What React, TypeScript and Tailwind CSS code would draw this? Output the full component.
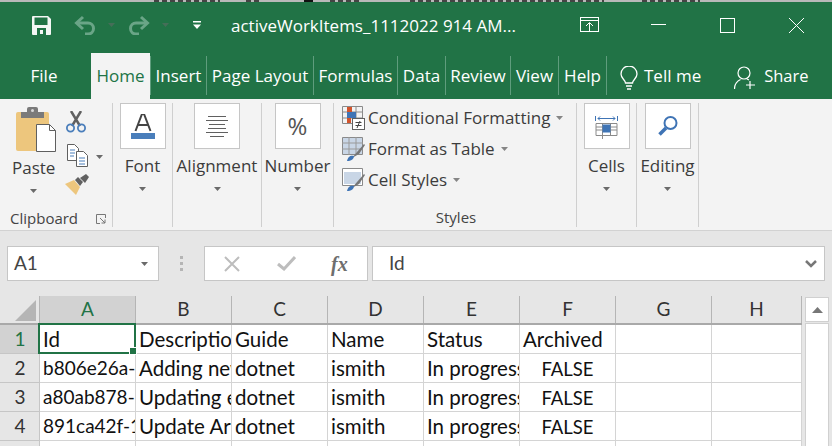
import React from 'react';

const tabs = [
  { label: 'Insert', w: 'w-[56px]' },
  { label: 'Page Layout', w: 'w-[107px]' },
  { label: 'Formulas', w: 'w-[84px]' },
  { label: 'Data', w: 'w-[48px]' },
  { label: 'Review', w: 'w-[65px]' },
  { label: 'View', w: 'w-[48px]' },
  { label: 'Help', w: 'w-[48px]' },
];

const columns = [
  { label: 'A', w: 'w-[96px]', active: true },
  { label: 'B', w: 'w-[96px]' },
  { label: 'C', w: 'w-[96px]' },
  { label: 'D', w: 'w-[96px]' },
  { label: 'E', w: 'w-[96px]' },
  { label: 'F', w: 'w-[96px]' },
  { label: 'G', w: 'w-[96px]' },
  { label: 'H', w: 'w-[90px]' },
];

const rows = [
  ['Id', 'Description', 'Guide', 'Name', 'Status', 'Archived'],
  ['b806e26a-1f3c', 'Adding new', 'dotnet', 'ismith', 'In progress', 'FALSE'],
  ['a80ab878-7c2d', 'Updating existing', 'dotnet', 'ismith', 'In progress', 'FALSE'],
  ['891ca42f-1b9e', 'Update Article', 'dotnet', 'ismith', 'In progress', 'FALSE'],
  ['', '', '', '', '', ''],
];

const Caret = ({ className = '' }: { className?: string }) => (
  <svg width="7" height="4" viewBox="0 0 7 4" className={className}>
    <path d="M0 0h7L3.500 4z" fill="#6a6a6a" />
  </svg>
);

const Sep = ({ w, children }: { w: string; children: React.ReactNode }) => (
  <div className={`${w} h-[124px] shrink-0 border-r border-[#cfcfcf] flex flex-col items-center relative`}>{children}</div>
);

const BigGroup = ({ w, label, children }: { w: string; label: string; children: React.ReactNode }) => (
  <Sep w={w}>
    <div className="w-[46px] h-[46px] bg-white border border-[#c6c6c6] flex items-center justify-center">{children}</div>
    <div className="mt-[5px] text-[17px] leading-[24px] text-[#3c3c3c] whitespace-nowrap">{label}</div>
    <Caret className="mt-[9px]" />
  </Sep>
);

const StyleRow = ({ icon, label }: { icon: React.ReactNode; label: string }) => (
  <div className="h-[31px] flex items-center">
    <div className="w-[26px] shrink-0">{icon}</div>
    <span className="text-[17px] leading-[24px] text-[#3c3c3c] whitespace-nowrap">{label}</span>
    <Caret className="ml-[6px] opacity-80" />
  </div>
);

export default function App() {
  return (
    <div className="w-[832px] h-[446px] overflow-hidden bg-[#e6e6e6] flex flex-col font-['Open_Sans',sans-serif] relative">
      <svg width="832" height="2" viewBox="0 0 832 2" className="block shrink-0 bg-[#b9b9b9]">
        <path d="M154 1h66M246 1h16M330 1h30M410 1h194M642 1h58" stroke="#444" strokeWidth="2" strokeDasharray="5 3" />
        <path d="M304 1h9" stroke="#111" strokeWidth="2" />
      </svg>

      {/* title bar */}
      <div className="h-[48px] bg-[#217346] shrink-0 flex items-center text-white pb-[2px]">
        <svg width="19" height="19" viewBox="0 0 19 19" className="ml-[32px]">
          <path d="M0 1a1 1 0 011-1h15l3 3v15a1 1 0 01-1 1H1a1 1 0 01-1-1z" fill="#f4f7f5" />
          <rect x="2.500" y="1.500" width="13" height="7.500" fill="#217346" />
          <rect x="5" y="12" width="9" height="7" fill="#217346" />
          <rect x="8" y="14" width="3" height="4" fill="#f4f7f5" />
        </svg>
        <svg width="22" height="20" viewBox="0 0 22 20" fill="none" stroke="#6aa587" strokeWidth="3" className="ml-[23px]">
          <path d="M9 2L2.500 8 9 14" />
          <path d="M3 8h11a5.500 5.500 0 010 11h-3" />
        </svg>
        <Caret className="ml-[12px] opacity-50" />
        <svg width="22" height="20" viewBox="0 0 22 20" fill="none" stroke="#6aa587" strokeWidth="3" className="ml-[13px]">
          <path d="M13 2l6.500 6L13 14" />
          <path d="M19 8H8a5.500 5.500 0 000 11h3" />
        </svg>
        <Caret className="ml-[12px] opacity-50" />
        <svg width="8" height="8" viewBox="0 0 8 8" className="ml-[24px]">
          <rect width="8" height="1.500" fill="#fff" />
          <path d="M0 3.500h8L4 8z" fill="#fff" />
        </svg>
        <span className="ml-[30px] mt-[2px] text-[17px] w-[330px] whitespace-nowrap">activeWorkItems_1112022 914 AM...</span>
        <svg width="19" height="16" viewBox="0 0 19 16" fill="none" stroke="#fff" className="ml-[19px]">
          <rect x="0.500" y="0.500" width="18" height="14" />
          <path d="M0 3.500h19M9.500 14V6M6 9l3.500-3.500L13 9" />
        </svg>
        <svg width="15" height="2" viewBox="0 0 15 2" className="ml-[52px]">
          <rect width="15" height="1" fill="#fff" />
        </svg>
        <svg width="15" height="15" viewBox="0 0 15 15" fill="none" stroke="#fff" className="ml-[54px]">
          <rect x="0.500" y="0.500" width="14" height="14" />
        </svg>
        <svg width="15" height="15" viewBox="0 0 15 15" fill="none" stroke="#fff" className="ml-[54px]">
          <path d="M0 0l15 15M15 0L0 15" />
        </svg>
      </div>

      {/* tabs */}
      <div className="h-[49px] bg-[#217346] shrink-0 flex text-white text-[17px] pt-[3px]">
        <div className="w-[91px] flex items-center justify-center pr-[3px]">File</div>
        <div className="w-[59px] bg-[#f3f3f3] text-[#217346] flex items-center justify-center">Home</div>
        <div className="flex h-[39px] mt-[3px] text-white">
          <div className="w-px bg-[#5f9d7d]" />
          {tabs.map((t) => (
            <div key={t.label} className={`${t.w} shrink-0 border-r border-[#5f9d7d] flex items-center justify-center whitespace-nowrap`}>
              {t.label}
            </div>
          ))}
        </div>
        <svg width="18" height="24" viewBox="0 0 18 24" fill="none" stroke="#fff" strokeWidth="1.300" className="ml-[13px] mt-[13px]">
          <path d="M5.500 17c0-3-4.500-4.500-4.500-9a8 8 0 0116 0c0 4.500-4.500 6-4.500 9z" />
          <path d="M6 20h6M7 23h4" />
        </svg>
        <span className="ml-[6px] flex items-center whitespace-nowrap">Tell me</span>
        <svg width="22" height="24" viewBox="0 0 22 24" fill="none" stroke="#fff" strokeWidth="1.200" className="ml-[33px] mt-[13px]">
          <circle cx="10" cy="7" r="6" />
          <path d="M0.500 23c0-5 3-8 6-9.500M13 13l2 1M16 15v8M12 19h9" />
        </svg>
        <span className="ml-[8px] flex items-center text-[16.500px]">Share</span>
      </div>

      {/* ribbon */}
      <div className="h-[132px] shrink-0 bg-[#f3f3f3] border-b border-[#d2d2d2] flex pt-[4px]">
        <Sep w="w-[113px]">
          <svg width="42" height="46" viewBox="0 0 42 46" className="absolute left-[15px] top-[4px]">
            <path d="M1 7a2 2 0 012-2h29a2 2 0 012 2v35a2 2 0 01-2 2H3a2 2 0 01-2-2z" fill="#edc67d" />
            <path d="M6 5h6V2a2 2 0 012-2h7a2 2 0 012 2v3h6v6H6z" fill="#7a7a7a" />
            <circle cx="17.500" cy="3.500" r="1.500" fill="#d8d8d8" />
            <path d="M21.500 17.500h13l6 6v21h-19z" fill="#fff" stroke="#5f5f5f" />
            <path d="M34.500 17.500v6h6" fill="none" stroke="#5f5f5f" />
          </svg>
          <div className="absolute left-[12px] top-[53px] text-[17px] leading-[24px] text-[#3c3c3c]">Paste</div>
          <Caret className="absolute left-[30px] top-[86px]" />
          <svg width="20" height="22" viewBox="0 0 20 22" fill="none" className="absolute left-[66px] top-[8px]">
            <path d="M5 0l9 15M15 0L6 15" stroke="#606060" strokeWidth="2.500" />
            <circle cx="4.500" cy="17" r="3.600" stroke="#4a7ebb" strokeWidth="1.800" />
            <circle cx="15.500" cy="17" r="3.600" stroke="#4a7ebb" strokeWidth="1.800" />
          </svg>
          <svg width="21" height="23" viewBox="0 0 21 23" fill="#fff" stroke="#606060" className="absolute left-[67px] top-[41px]">
            <path d="M0.500 0.500h7l4 4v12h-11z" />
            <path d="M9.500 7.500h7l4 4v11h-11z" />
            <path d="M3 6h5M3 9h5M3 12h4M12 14h6M12 17h6M12 20h6" stroke="#4a7ebb" />
          </svg>
          <Caret className="absolute left-[96px] top-[52px]" />
          <svg width="24" height="21" viewBox="0 0 24 21" className="absolute left-[65px] top-[71px]">
            <path d="M0 10l9-4 6 7-4 8z" fill="#edc67d" />
            <path d="M10 6l3-3 5 5-3 4z" fill="#606060" />
            <path d="M15 4l6-4 3 3-4 6z" fill="#606060" />
          </svg>
          <div className="absolute left-[10px] top-[104px] text-[15px] leading-[22px] text-[#444]">Clipboard</div>
          <svg width="10" height="10" viewBox="0 0 10 10" fill="none" stroke="#777" className="absolute left-[96px] top-[111px]">
            <path d="M9.500 4V0.500H0.500V9.500H4M4 4l5 5M9 5.500V9H5.500" />
          </svg>
        </Sep>
        <BigGroup w="w-[60px]" label="Font">
          <svg width="24" height="25" viewBox="0 0 24 25">
            <path d="M4.500 17L11 0h2l6.500 17M7 11h10" fill="none" stroke="#444" strokeWidth="2" />
            <rect y="19" width="24" height="6" fill="#4a7ebb" />
          </svg>
        </BigGroup>
        <BigGroup w="w-[89px]" label="Alignment">
          <svg width="22" height="21" viewBox="0 0 22 21" stroke="#606060">
            <path d="M2 0.500h18M0 4.500h22M3 8.500h16M2 12.500h18M0 16.500h22M4 20.500h14" />
          </svg>
        </BigGroup>
        <BigGroup w="w-[72px]" label="Number">
          <span className="text-[24px] leading-none text-[#555]">%</span>
        </BigGroup>

        {/* styles */}
        <Sep w="w-[243px]">
          <div className="w-full pl-[8px] -mt-[1px]">
            <StyleRow
              label="Conditional Formatting"
              icon={
                <svg width="23" height="24" viewBox="0 0 23 24" fill="none">
                  <path d="M0.500 0.500h20v17h-20zM7 0v18M14 0v18M0 6h21M0 12h21" stroke="#8a8a8a" />
                  <rect x="5" y="1" width="5" height="5" fill="#d2542c" />
                  <rect x="5" y="6" width="9" height="6" fill="#3f74b5" />
                  <rect x="5" y="12" width="4" height="5" fill="#d2542c" />
                  <rect x="10.500" y="12.500" width="12" height="11" fill="#fff" stroke="#606060" />
                  <path d="M13.500 16.500h6M13.500 19.500h6M15 22l3-7" stroke="#444" />
                </svg>
              }
            />
            <StyleRow
              label="Format as Table"
              icon={
                <svg width="23" height="24" viewBox="0 0 23 24" fill="none">
                  <path d="M0.500 0.500h20v17h-20z" fill="#c9d6e6" stroke="#8a8a8a" />
                  <path d="M7 0v18M14 0v18M0 6h21M0 12h21" stroke="#9a9a9a" />
                  <path d="M10 21l5-6 7-8 1 1-6 9z" fill="#777" />
                  <path d="M5 24c1-5 4-6 7-5 0 3-3 5-7 5z" fill="#3f74b5" />
                </svg>
              }
            />
            <StyleRow
              label="Cell Styles"
              icon={
                <svg width="23" height="23" viewBox="0 0 23 23" fill="none">
                  <path d="M0.500 0.500h20v17h-20z" fill="#fff" stroke="#8a8a8a" />
                  <rect x="2" y="4" width="17" height="12" fill="#c9d6e6" />
                  <path d="M10 20l5-6 7-8 1 1-6 9z" fill="#777" />
                  <path d="M5 23c1-5 4-6 7-5 0 3-3 5-7 5z" fill="#3f74b5" />
                </svg>
              }
            />
          </div>
          <div className="absolute -bottom-[1px] left-0 right-0 text-center text-[15px] leading-[22px] text-[#444] pl-[2px]">Styles</div>
        </Sep>
        <BigGroup w="w-[60px]" label="Cells">
          <svg width="23" height="25" viewBox="0 0 23 25" fill="none">
            <path d="M0.500 2v5M22.500 2v5M3 4.500h17M3 4.500l2-2M3 4.500l2 2M20 4.500l-2-2M20 4.500l-2 2" stroke="#3f74b5" />
            <path d="M1 9.500h21v12H1zM7.500 10v15M15.500 10v11M1 16h21M1 13h21" stroke="#8a8a8a" />
            <rect x="7.500" y="10.500" width="8" height="8" fill="#3f74b5" />
          </svg>
        </BigGroup>
        <BigGroup w="w-[62px]" label="Editing">
          <svg width="20" height="20" viewBox="0 0 20 20" fill="none" stroke="#3f74b5">
            <circle cx="12.500" cy="7" r="6" strokeWidth="2" />
            <path d="M8 12L1.500 18.500" strokeWidth="3.500" />
          </svg>
        </BigGroup>
      </div>

      {/* formula bar */}
      <div className="h-[65px] shrink-0 flex items-start pt-[15px] pl-[7px] font-['Lato',sans-serif]">
        <div className="w-[152px] h-[35px] bg-white border border-[#c6c6c6] flex items-center pl-[6px] text-[19px] text-[#444]">
          A1
          <Caret className="ml-auto mr-[10px]" />
        </div>
        <div className="w-[45px] h-[35px] flex flex-col items-center justify-center gap-[3px]">
          <span className="w-[3px] h-[3px] bg-[#b5b5b5]" />
          <span className="w-[3px] h-[3px] bg-[#b5b5b5]" />
          <span className="w-[3px] h-[3px] bg-[#b5b5b5]" />
        </div>
        <div className="w-[164px] h-[35px] bg-white border border-[#c6c6c6] flex items-center pl-[19px]">
          <svg width="16" height="16" viewBox="0 0 16 16" stroke="#bdbdbd" strokeWidth="2" fill="none">
            <path d="M1 1l14 14M15 1L1 15" />
          </svg>
          <svg width="19" height="15" viewBox="0 0 19 15" stroke="#bdbdbd" strokeWidth="3" fill="none" className="ml-[37px]">
            <path d="M1 8l6 5L18 1" />
          </svg>
          <span className="ml-[35px] font-['Liberation_Serif',serif] italic font-bold text-[20px] leading-none text-[#6e6e6e]">fx</span>
        </div>
        <div className="w-[4px]" />
        <div className="w-[453px] h-[35px] bg-white border border-[#c6c6c6] flex items-center pl-[16px] text-[19px] text-[#444]">
          Id
          <svg width="12" height="8" viewBox="0 0 12 8" fill="none" stroke="#777" strokeWidth="2.500" className="ml-auto mr-[7px]">
            <path d="M1 1l5 5 5-5" />
          </svg>
        </div>
      </div>

      {/* sheet */}
      <div className="flex-1 flex bg-[#e6e6e6] relative">
        <div className="w-[805px] shrink-0">
          <div className="flex h-[29px] border-b-2 border-[#a9a9a9] w-[802px]">
            <div className="w-[40px] shrink-0 border-r border-[#b5b5b5] relative">
              <svg width="22" height="21" viewBox="0 0 22 21" className="absolute left-[15px] top-[4px]">
                <path d="M21 0v21H0z" fill="#b5b5b5" />
              </svg>
            </div>
            {columns.map((c) => (
              <div
                key={c.label}
                className={`${c.w} shrink-0 border-r border-[#b5b5b5] flex items-center justify-center text-[19px] font-['Lato',sans-serif] ${c.active ? 'bg-[#d2d2d2] text-[#217346]' : 'text-[#333]'}`}
              >
                {c.label}
              </div>
            ))}
          </div>
          {rows.map((row, i) => (
            <div key={i} className="flex h-[29px] w-[802px] bg-white font-['Lato',sans-serif] text-[20.500px] text-[#111]">
              <div className={`w-[40px] shrink-0 border-r border-b border-[#c6c6c6] flex items-center justify-center pl-[1px] text-[19px] ${i === 0 ? 'bg-[#d2d2d2] text-[#217346]' : 'bg-[#e6e6e6] text-[#333]'}`}>
                {i + 1}
              </div>
              {row.map((cell, j) => (
                <div
                  key={j}
                  className={`w-[96px] shrink-0 border-r border-b border-[#d4d4d4] overflow-hidden whitespace-nowrap flex items-center pl-[3px] ${j === 0 && i > 0 ? 'text-[19px]' : ''} ${i > 0 && j !== 5 ? 'pt-[1px]' : ''} ${j === 5 && i > 0 ? 'justify-center text-[18.500px] pr-[3px] pt-[3px]' : ''}`}
                >
                  {cell}
                </div>
              ))}
              <div className="w-[96px] shrink-0 border-r border-b border-[#d4d4d4]" />
              <div className="w-[90px] shrink-0 border-r border-b border-[#d4d4d4]" />
            </div>
          ))}
        </div>
        <div className="flex-1 flex flex-col">
          <div className="w-[24px] h-[25px] mt-[1px] bg-white border border-[#d0d0d0] flex items-center justify-center">
            <svg width="11" height="6" viewBox="0 0 11 6"><path d="M0 6h11L5.500 0z" fill="#777" /></svg>
          </div>
          <div className="w-[24px] flex-1 bg-white border border-[#d0d0d0] mt-[1px]" />
        </div>
        {/* selected cell */}
        <div className="absolute left-[38px] top-[27px] w-[98px] h-[31px] border-2 border-[#217346]">
          <span className="absolute -right-[3px] -bottom-[3px] w-[6px] h-[6px] bg-[#217346] border border-white box-content" />
        </div>
      </div>
    </div>
  );
}
